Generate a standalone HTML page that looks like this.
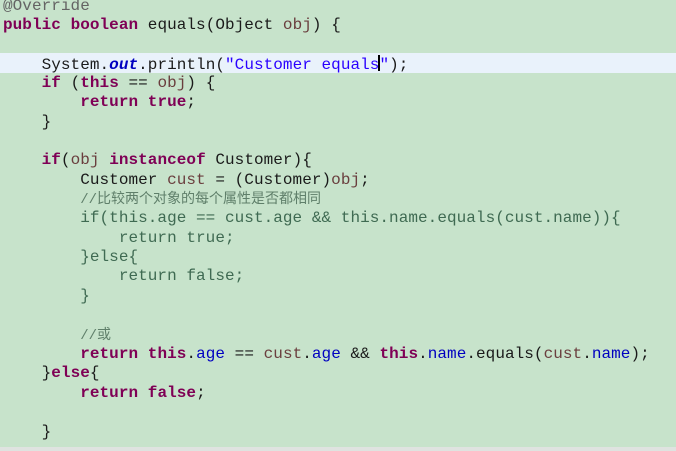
<!DOCTYPE html>
<html><head><meta charset="utf-8"><style>
html,body{margin:0;padding:0;}
body{width:676px;height:451px;background:#c7e3cb;position:relative;overflow:hidden;font-family:"Liberation Mono","Noto Sans CJK SC",monospace;font-size:16px;color:#1a1a1a;letter-spacing:0.05px;}
.l{position:absolute;left:3px;white-space:pre;height:19px;line-height:19px;}
.k{color:#7f0055;font-weight:bold;}
.v{color:#6a3e3e;}
.f{color:#0000c0;}
.s{color:#2a00ff;}
.c{color:#5f7f6a;}
.c span{font-size:14px;letter-spacing:0;}
.a{color:#646464;}
.fd{color:#3f6a52;}
.hl{position:absolute;left:0;top:53px;width:676px;height:20px;background:#e9f2fb;}
.bot{position:absolute;left:0;top:447px;width:676px;height:4px;background:#dfe3e0;}
.cur{display:inline-block;width:2px;height:16px;background:#000;vertical-align:-2px;margin:0 -1px;}
</style></head><body>
<div class="hl"></div>
<div class="l a" style="top:-3px">@Override</div>
<div class="l" style="top:16px"><span class="k">public</span> <span class="k">boolean</span> equals(Object <span class="v">obj</span>) {</div>
<div class="l" style="top:55px">    System.<span class="f" style="font-style:italic;font-weight:bold">out</span>.println(<span class="s">"Customer equals<span class="cur"></span>"</span>);</div>
<div class="l" style="top:74px">    <span class="k">if</span> (<span class="k">this</span> == <span class="v">obj</span>) {</div>
<div class="l" style="top:93px">        <span class="k">return</span> <span class="k">true</span>;</div>
<div class="l" style="top:113px">    }</div>
<div class="l" style="top:151px">    <span class="k">if</span>(<span class="v">obj</span> <span class="k">instanceof</span> Customer){</div>
<div class="l" style="top:171px">        Customer <span class="v">cust</span> = (Customer)<span class="v">obj</span>;</div>
<div class="l c" style="top:190px">        <span>//比较两个对象的每个属性是否都相同</span></div>
<div class="l fd" style="top:209px">        if(this.age == cust.age &amp;&amp; this.name.equals(cust.name)){</div>
<div class="l fd" style="top:229px">            return true;</div>
<div class="l fd" style="top:248px">        }else{</div>
<div class="l fd" style="top:267px">            return false;</div>
<div class="l fd" style="top:287px">        }</div>
<div class="l c" style="top:326px">        <span>//或</span></div>
<div class="l" style="top:345px">        <span class="k">return</span> <span class="k">this</span>.<span class="f">age</span> == <span class="v">cust</span>.<span class="f">age</span> &amp;&amp; <span class="k">this</span>.<span class="f">name</span>.equals(<span class="v">cust</span>.<span class="f">name</span>);</div>
<div class="l" style="top:364px">    }<span class="k">else</span>{</div>
<div class="l" style="top:384px">        <span class="k">return</span> <span class="k">false</span>;</div>
<div class="l" style="top:423px">    }</div>
<div class="bot"></div>
</body></html>
